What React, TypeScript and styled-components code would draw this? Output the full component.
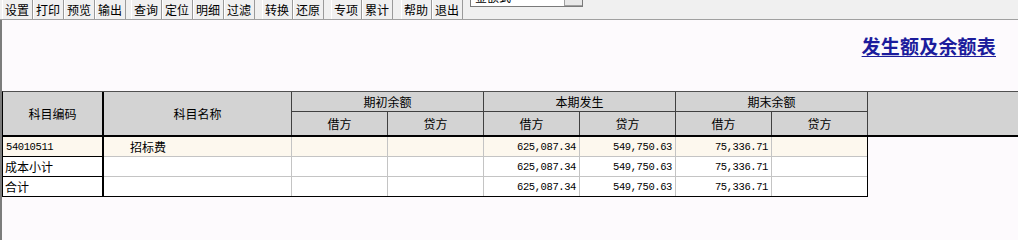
import React from 'react';
import styled, { createGlobalStyle } from 'styled-components';

const GlobalStyle = createGlobalStyle`
  body {
    margin: 0;
    background: #fdfafd;
    font-family: "Noto Sans CJK SC", "Liberation Sans", sans-serif;
    font-size: 12px;
    color: #000;
  }
`;

const groups: string[][] = [
  ['设置', '打印', '预览', '输出'],
  ['查询', '定位', '明细', '过滤'],
  ['转换', '还原'],
  ['专项', '累计'],
  ['帮助', '退出'],
];
const groupGaps = [2, 5, 7, 7, 8];

interface Row {
  code: string;
  name: string;
  values: string[];
  shaded?: boolean;
}

const rows: Row[] = [
  { code: '54010511', name: '招标费', values: ['', '', '625,087.34', '549,750.63', '75,336.71', ''], shaded: true },
  { code: '成本小计', name: '', values: ['', '', '625,087.34', '549,750.63', '75,336.71', ''] },
  { code: '合计', name: '', values: ['', '', '625,087.34', '549,750.63', '75,336.71', ''] },
];

export default function App() {
  return (
    <>
      <GlobalStyle />
      <Toolbar>
        {groups.map((g, i) => (
          <Group key={i} $gap={groupGaps[i]}>
            {g.map(label => (
              <ToolButton key={label}>{label}</ToolButton>
            ))}
          </Group>
        ))}
        <Combo>
          <ComboText>金额式</ComboText>
          <ComboArrow />
        </Combo>
      </Toolbar>
      <Content>
        <TitleBar>
          <Title>发生额及余额表</Title>
        </TitleBar>
        <Header>
          <HeadCell $row="1 / 3" $col="1" $thick>科目编码</HeadCell>
          <HeadCell $row="1 / 3" $col="2">科目名称</HeadCell>
          <HeadCell $row="1" $col="3 / 5" $under>期初余额</HeadCell>
          <HeadCell $row="1" $col="5 / 7" $under>本期发生</HeadCell>
          <HeadCell $row="1" $col="7 / 9" $under>期末余额</HeadCell>
          {['借方', '贷方', '借方', '贷方', '借方', '贷方'].map((t, i) => (
            <HeadCell key={i} $row="2" $col={String(i + 3)}>{t}</HeadCell>
          ))}
          <HeadFiller />
        </Header>
        <Body>
          {rows.map((r, i) => (
            <BodyRow key={i} $shaded={r.shaded} $last={i === rows.length - 1}>
              <CodeCell $mono={/^\d/.test(r.code)}>{r.code}</CodeCell>
              <NameCell>{r.name}</NameCell>
              {r.values.map((v, j) => (
                <NumCell key={j} $end={j === r.values.length - 1}>{v}</NumCell>
              ))}
            </BodyRow>
          ))}
        </Body>
      </Content>
    </>
  );
}

const Toolbar = styled.div`
  display: flex;
  align-items: flex-start;
  height: 19px;
  background: #f0f0f0;
  border-bottom: 1px solid #a0a0a0;
  overflow: hidden;
`;

const Group = styled.div<{ $gap: number }>`
  display: flex;
  margin-left: ${p => p.$gap}px;
`;

const ToolButton = styled.div`
  width: 31px;
  height: 19px;
  box-sizing: border-box;
  line-height: 20px;
  text-align: center;
  border-right: 1px solid #9a9a9a;
  box-shadow: inset 1px 0 0 #ffffff;
  white-space: nowrap;
`;

const Combo = styled.div`
  display: flex;
  width: 113px;
  height: 21px;
  margin: -14px 0 0 7px;
  box-sizing: border-box;
  background: #fff;
  border: 1px solid #7a7a7a;
`;

const ComboText = styled.div`
  flex: 1;
  padding-left: 4px;
  line-height: 19px;
`;

const ComboArrow = styled.div`
  width: 17px;
  background: #e8e8e8;
  border-left: 1px solid #a0a0a0;
  border-bottom: 1px solid #a0a0a0;
`;

const Content = styled.div`
  border-left: 2px solid #7c7c7c;
  min-height: 220px;
  background: #fdfafd;
`;

const TitleBar = styled.div`
  display: flex;
  justify-content: flex-end;
  height: 71px;
  box-sizing: border-box;
  padding: 15px 22px 0 0;
`;

const Title = styled.div`
  font-size: 19px;
  line-height: 22px;
  font-weight: 700;
  color: #1c1c9c;
  text-decoration: underline;
  text-underline-offset: 2px;
  letter-spacing: 0.2px;
`;

const Header = styled.div`
  display: grid;
  grid-template-columns: 101px 188px repeat(6, 96px) 1fr;
  grid-template-rows: 20px 23px;
  background: #d3d3d3;
  border-top: 1px solid #505050;
  border-bottom: 2px solid #000;
  border-left: 1px solid #000;
`;

const HeadCell = styled.div<{ $row: string; $col: string; $thick?: boolean; $under?: boolean }>`
  grid-row: ${p => p.$row};
  grid-column: ${p => p.$col};
  display: flex;
  align-items: center;
  justify-content: center;
  border-right: ${p => (p.$thick ? '2px solid #000' : '1px solid #404040')};
  border-bottom: ${p => (p.$under ? '1px solid #404040' : 'none')};
`;

const HeadFiller = styled.div`
  grid-row: 1 / 3;
  grid-column: 9;
`;

const Body = styled.div`
  display: inline-block;
  border-left: 1px solid #000;
  border-right: 1px solid #000;
  border-bottom: 1px solid #000;
`;

const BodyRow = styled.div<{ $shaded?: boolean; $last?: boolean }>`
  display: grid;
  grid-template-columns: 101px 188px repeat(5, 96px) 95px;
  height: ${p => (p.$last ? 19 : 20)}px;
  background: ${p => (p.$shaded ? '#fdf8ee' : '#fff')};

  & > div {
    border-bottom: ${p => (p.$last ? 'none' : '1px solid #c4c4c4')};
  }
  & > div:first-child {
    border-bottom: ${p => (p.$last ? 'none' : '1px solid #000')};
  }
`;

const CodeCell = styled.div<{ $mono?: boolean }>`
  display: flex;
  align-items: center;
  padding-left: ${p => (p.$mono ? 3 : 2)}px;
  border-right: 2px solid #000;
  font-family: ${p => (p.$mono ? '"Liberation Mono", monospace' : '"Noto Sans CJK SC", sans-serif')};
  font-size: ${p => (p.$mono ? 10.5 : 12)}px;
  letter-spacing: ${p => (p.$mono ? '-0.4px' : '0')};
`;

const NameCell = styled.div`
  display: flex;
  align-items: center;
  padding-left: 26px;
  border-right: 1px solid #c4c4c4;
`;

const NumCell = styled.div<{ $end?: boolean }>`
  display: flex;
  align-items: center;
  justify-content: flex-end;
  padding-right: 3px;
  border-right: ${p => (p.$end ? 'none' : '1px solid #c4c4c4')};
  font-family: "Liberation Mono", monospace;
  font-size: 10.5px;
  letter-spacing: -0.4px;
`;
